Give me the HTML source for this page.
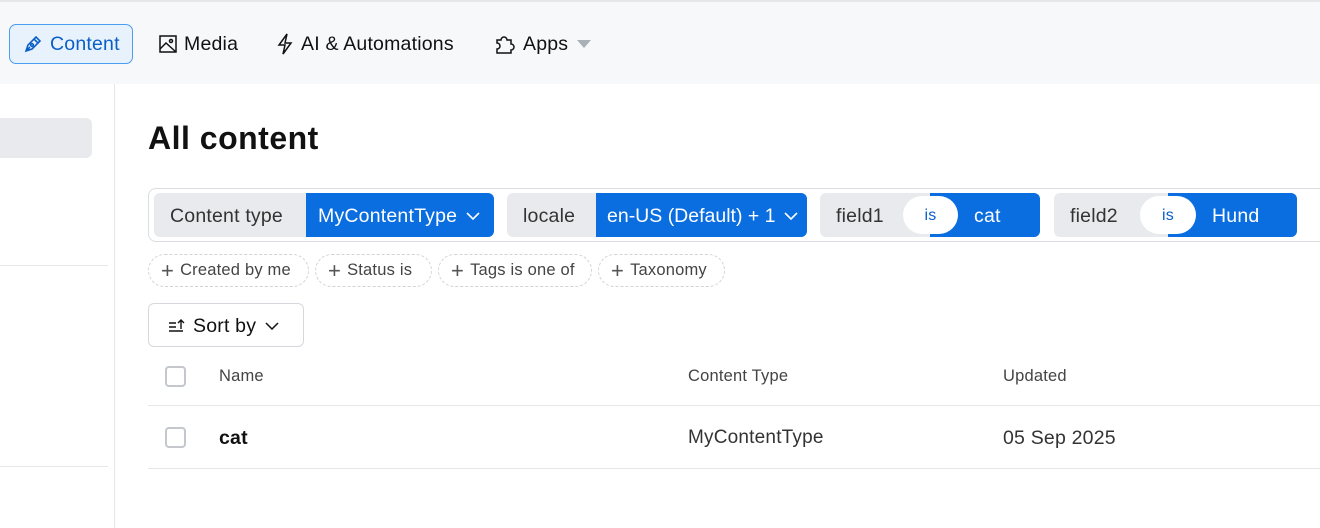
<!DOCTYPE html>
<html><head><style>
*{box-sizing:border-box;margin:0;padding:0}
body{width:1320px;height:528px;overflow:hidden;background:#fff;font-family:"Liberation Sans",sans-serif;color:#111;position:relative;letter-spacing:0.2px}
.top{position:absolute;left:0;top:0;width:1320px;height:84px;background:#f7f8f9;border-top:2px solid #e5e7eb}
.nav{position:absolute;top:22px;height:40px;display:flex;align-items:center;font-size:19.5px;color:#111}
.nav svg{margin-right:7px}
.side{position:absolute;left:0;top:84px;width:115px;height:444px;border-right:1px solid #e5e7eb}
.abs{position:absolute}
.pill{position:absolute;top:193px;height:44px;border-radius:6px;display:flex;align-items:center;font-size:19.5px;padding-top:2px}
.g{background:#e8eaed;color:#333}
.b{background:#0a6ee0;color:#fff}
.add{position:absolute;top:254px;height:33px;border:1px dashed #cfd3d8;border-radius:17px;display:flex;align-items:center;padding:0 12px;font-size:16.5px;color:#444}
.add span{font-size:22px;margin-right:6px;font-weight:300;color:#555}
.cb{position:absolute;width:21px;height:21px;border:2px solid #c4c8cd;border-radius:4px}
</style></head><body>
<div class="top">
  <div class="nav" style="left:9px;width:124px;background:#e8f2fd;border:1px solid #4a9df0;border-radius:7px;color:#0a5fc7;padding-left:13px">
    <svg width="20" height="20" viewBox="0 0 20 20" fill="none" stroke="#0a5fc7" stroke-width="1.6"><path d="M3 17l2-6 6-6 4 4-6 6z M11 5l2-2 4 4-2 2 M3 17l4-4"/><circle cx="9" cy="11" r="1.3"/></svg>Content</div>
  <div class="nav" style="left:159px"><svg width="18" height="18" viewBox="0 0 18 18" fill="none" stroke="#111" stroke-width="1.5"><rect x="1" y="1" width="16" height="16"/><path d="M1 14l6-6 10 9"/><circle cx="12" cy="6" r="1.5"/></svg>Media</div>
  <div class="nav" style="left:276px"><svg width="18" height="22" viewBox="0 0 18 22" fill="none" stroke="#111" stroke-width="1.5"><path d="M11 1L3 12h6l-2 9 8-11H9z"/></svg>AI &amp; Automations</div>
  <div class="nav" style="left:494px"><svg width="22" height="20" viewBox="0 0 22 20" fill="none" stroke="#111" stroke-width="1.5"><path d="M3 6h4a3 3 0 016 0h4v4a3 3 0 010 6v3H3v-4a3 3 0 000-6z"/></svg>Apps<span style="margin-left:9px;width:0;height:0;border-left:7px solid transparent;border-right:7px solid transparent;border-top:8px solid #a8b0b8"></span></div>
</div>
<div class="side">
  <div class="abs" style="left:0;top:34px;width:92px;height:40px;background:#e8eaed;border-radius:0 6px 6px 0"></div>
  <div class="abs" style="left:0;top:181px;width:108px;height:1px;background:#e5e7eb"></div>
  <div class="abs" style="left:0;top:382px;width:108px;height:1px;background:#e5e7eb"></div>
</div>
<div class="abs" style="left:148px;top:120px;font-size:32px;font-weight:bold;color:#111;letter-spacing:0.5px">All content</div>
<div class="abs" style="left:148px;top:188px;width:1190px;height:54px;border:1.5px solid #dadde1;border-radius:8px"></div>
<div class="pill g" style="left:154px;width:340px;padding-left:16px">Content type</div>
<div class="pill b" style="left:306px;width:188px;padding-left:12px;border-radius:0 6px 6px 0">MyContentType <svg style="margin-left:9px" width="14" height="8" viewBox="0 0 14 8" fill="none" stroke="#fff" stroke-width="1.6"><path d="M1 1l6 6 6-6"/></svg></div>
<div class="pill g" style="left:507px;width:300px;padding-left:16px">locale</div>
<div class="pill b" style="left:596px;width:211px;padding-left:11px;border-radius:0 6px 6px 0;letter-spacing:0">en-US (Default) + 1 <svg style="margin-left:8px" width="14" height="8" viewBox="0 0 14 8" fill="none" stroke="#fff" stroke-width="1.6"><path d="M1 1l6 6 6-6"/></svg></div>
<div class="pill g" style="left:820px;width:220px;padding-left:16px">field1</div>
<div class="pill b" style="left:930px;width:110px;padding-left:44px;border-radius:0 6px 6px 0">cat</div>
<div class="abs" style="left:903px;top:196px;width:55px;height:38px;background:#fff;border-radius:19px;color:#0a5fc7;font-size:16px;text-align:center;line-height:40px">is</div>
<div class="pill g" style="left:1054px;width:243px;padding-left:16px">field2</div>
<div class="pill b" style="left:1168px;width:129px;padding-left:44px;border-radius:0 6px 6px 0">Hund</div>
<div class="abs" style="left:1140px;top:196px;width:56px;height:38px;background:#fff;border-radius:19px;color:#0a5fc7;font-size:16px;text-align:center;line-height:40px">is</div>
<div class="add" style="left:148px;width:161px"><span>+</span>Created by me</div>
<div class="add" style="left:315px;width:117px"><span>+</span>Status is</div>
<div class="add" style="left:438px;width:154px"><span>+</span>Tags is one of</div>
<div class="add" style="left:598px;width:127px"><span>+</span>Taxonomy</div>
<div class="abs" style="left:148px;top:303px;width:156px;height:44px;border:1.5px solid #d5d8dc;border-radius:6px;display:flex;align-items:center;padding-left:19px;font-size:19.5px;padding-top:2px">
<svg width="18" height="16" viewBox="0 0 18 16" fill="none" stroke="#111" stroke-width="1.4"><path d="M1 5h7M1 9h7M1 13h14M13 11V2M10 5l3-3 3 3"/></svg><span style="margin-left:7px">Sort by</span><svg style="margin-left:9px" width="14" height="8" viewBox="0 0 14 8" fill="none" stroke="#111" stroke-width="1.5"><path d="M1 1l6 6 6-6"/></svg></div>
<div class="cb" style="left:165px;top:366px"></div>
<div class="abs" style="left:219px;top:367px;font-size:16.5px;color:#444">Name</div>
<div class="abs" style="left:688px;top:367px;font-size:16.5px;color:#444">Content Type</div>
<div class="abs" style="left:1003px;top:367px;font-size:16.5px;color:#444">Updated</div>
<div class="abs" style="left:148px;top:405px;width:1172px;height:1px;background:#e5e7eb"></div>
<div class="cb" style="left:165px;top:427px"></div>
<div class="abs" style="left:219px;top:427px;font-size:19.5px;font-weight:bold;color:#111">cat</div>
<div class="abs" style="left:688px;top:427px;font-size:19px;color:#333">MyContentType</div>
<div class="abs" style="left:1003px;top:427px;font-size:19.5px;color:#333">05 Sep 2025</div>
<div class="abs" style="left:148px;top:468px;width:1172px;height:1px;background:#e5e7eb"></div>
</body></html>
